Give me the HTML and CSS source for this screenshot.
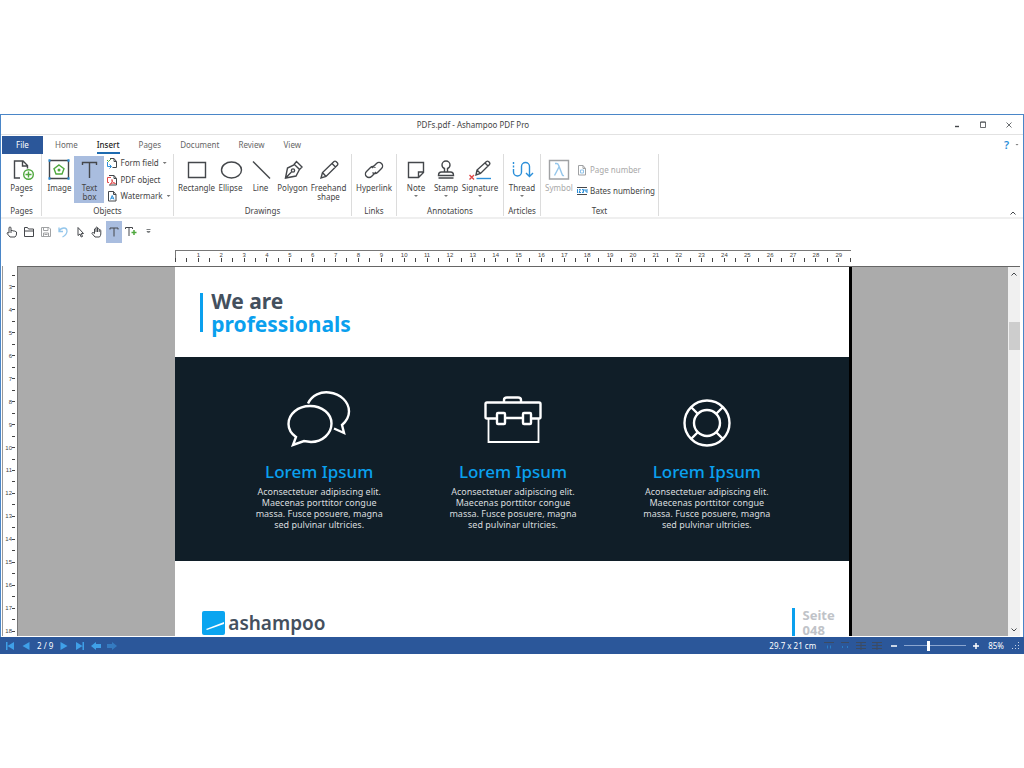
FILE: index.html
```html
<!DOCTYPE html>
<html lang="en">
<head>
    <meta charset="UTF-8">
    <title>PDFs.pdf - Ashampoo PDF Pro</title>
    <meta name="viewport" content="width=device-width, initial-scale=1.0">
    <link rel="stylesheet" href="styles.css">
</head>
<body>
    <div class="window">
        <!-- Title bar -->
        <header class="title-bar">
            <span class="title">PDFs.pdf - Ashampoo PDF Pro</span>
            <div class="window-buttons">
                <button aria-label="Minimize"><svg width="8" height="8" viewBox="0 0 8 8"><path d="M2 5.500h4" stroke-width="1.400"/></svg></button>
                <button aria-label="Maximize"><svg width="8" height="8" viewBox="0 0 8 8"><path d="M1.500 1h5v5.500h-5zM1.500 1.200h5" stroke-width=".8"/></svg></button>
                <button aria-label="Close"><svg width="8" height="8" viewBox="0 0 8 8"><path d="M1.500 1.500l5 5M6.500 1.500l-5 5" stroke-width=".8"/></svg></button>
            </div>
        </header>

        <!-- Ribbon tabs -->
        <nav class="tabs">
            <button class="tab file">File</button>
            <button class="tab">Home</button>
            <button class="tab active">Insert</button>
            <button class="tab">Pages</button>
            <button class="tab">Document</button>
            <button class="tab">Review</button>
            <button class="tab">View</button>
            <button class="help">?</button>
            <i class="arrow"></i>
        </nav>

        <!-- Ribbon -->
        <div class="ribbon">
            <section class="group pages">
                <div class="tools">
                    <button class="tool">
                        <svg width="24" height="22" viewBox="0 0 24 22"><path d="M10 20H4.500V3H13l4.500 4.500v3M12.500 3v5h5"/><circle class="green" cx="18.500" cy="16.500" r="4.800"/><path class="green" d="M18.500 13.500v6M15.500 16.500h6"/></svg>
                        <span>Pages</span><i class="arrow"></i>
                    </button>
                </div>
                <h2>Pages</h2>
            </section>
            <section class="group objects">
                <div class="tools">
                    <button class="tool">
                        <svg width="24" height="22" viewBox="0 0 24 22"><path d="M2.500 2.500h19v18h-19z"/><path class="green" d="M12 7l5 3.800-2 5.200H9l-2-5.200z"/><circle class="green" cx="12" cy="12" r=".8"/><path class="blue" stroke-width="2.400" d="M1.500 2.500h2M20.500 2.500h2M1.500 20.500h2M20.500 20.500h2"/></svg>
                        <span>Image</span>
                    </button>
                    <button class="tool selected">
                        <svg width="24" height="22" viewBox="0 0 24 22"><path d="M5.500 7V4.500h14V7M12.500 4.500V20"/></svg>
                        <span>Text<br>box</span>
                    </button>
                    <div class="tool-list">
                        <button><svg width="12" height="12" viewBox="0 0 12 12"><path d="M4 1.500h4l2.500 3v6H6.500M8 1.500v3h2.500"/><path class="blue" d="M1.500 5v4.500h3.500M3.500 7.500l2 2-2 2"/><path class="green" d="M1 3l1.500 1.500L5 2"/></svg>Form field<i class="arrow"></i></button>
                        <button><svg width="12" height="12" viewBox="0 0 12 12"><path d="M3 1.500h5l2.500 3v6.500H3M8 1.500v3h2.500"/><path class="red" d="M5 3.500H1.500v5H3M4 10.500c2.500-2 2.500-5 2-5s0 3 3.500 4c-1.500-1-4-.5-5.500 1z"/></svg>PDF object</button>
                        <button><svg width="12" height="12" viewBox="0 0 12 12"><path d="M2.500 1.500h5l2.500 3v6.500H2.500zM7.500 1.500v3H10"/><path class="blue" d="M4.500 9.500l1.700-4 1.800 4M5 8.200h2.500"/></svg>Watermark<i class="arrow"></i></button>
                    </div>
                </div>
                <h2>Objects</h2>
            </section>
            <section class="group drawings">
                <div class="tools">
                    <button class="tool wide">
                        <svg width="24" height="22" viewBox="0 0 24 22"><path d="M3.500 4.500h17v15h-17z"/></svg>
                        <span>Rectangle</span>
                    </button>
                    <button class="tool">
                        <svg width="24" height="22" viewBox="0 0 24 22"><ellipse cx="12.500" cy="12" rx="10" ry="8"/></svg>
                        <span>Ellipse</span>
                    </button>
                    <button class="tool">
                        <svg width="24" height="22" viewBox="0 0 24 22"><path d="M4 3.500l17 17"/></svg>
                        <span>Line</span>
                    </button>
                    <button class="tool polygon">
                        <svg width="24" height="22" viewBox="0 0 24 22"><path d="M4.500 20l2-10 7-3.500 5 5L15 18zM4.500 20l6-6M13 6.500l2.500-3 5.500 5.500-2.500 2.500"/><circle cx="12" cy="12.500" r="1.600"/></svg>
                        <span>Polygon</span>
                    </button>
                    <button class="tool wide">
                        <svg width="24" height="22" viewBox="0 0 24 22"><path d="M4 20l1.500-5.500L17 3.500q1-.8 2 0L20.500 5q.8 1 0 2L9 18.500zM15 5.500L18.500 9M5.500 14.500L9 18.500"/></svg>
                        <span>Freehand<br>shape</span>
                    </button>
                </div>
                <h2>Drawings</h2>
            </section>
            <section class="group links">
                <div class="tools">
                    <button class="tool wide">
                        <svg width="24" height="22" viewBox="0 0 24 22"><path d="M10 10l4.500-4.500a3.500 3.500 0 0 1 5 5L15.500 14.500a3.500 3.500 0 0 1-5 0M14 14l-4.500 4.500a3.500 3.500 0 0 1-5-5L8.500 9.500a3.500 3.500 0 0 1 5 0"/></svg>
                        <span>Hyperlink</span>
                    </button>
                </div>
                <h2>Links</h2>
            </section>
            <section class="group annotations">
                <div class="tools">
                    <button class="tool">
                        <svg width="24" height="22" viewBox="0 0 24 22"><path d="M4.500 4.500h15v10l-5 5h-10zM19.500 14h-5v5.500"/></svg>
                        <span>Note</span><i class="arrow"></i>
                    </button>
                    <button class="tool">
                        <svg width="24" height="22" viewBox="0 0 24 22"><path d="M10.500 14v-3.500q-2.500-1-2.500-3.500a4 4 0 0 1 8 0q0 2.500-2.500 3.500V14M4.500 17.500q0-3.500 3-3.500h9q3 0 3 3.500zM4.500 20h15"/></svg>
                        <span>Stamp</span><i class="arrow"></i>
                    </button>
                    <button class="tool wide">
                        <svg width="24" height="22" viewBox="0 0 24 22"><path d="M8 17l1-5 9.500-8.500q1-.8 2 0l1 1q.8 1 0 2L12.500 15.500zM17 5l3 3M9 12l3.500 3.500"/><path class="blue" d="M8.500 20.500H23"/><path class="red" d="M1.500 17l4.500 4.500M6 17l-4.500 4.500"/></svg>
                        <span>Signature</span><i class="arrow"></i>
                    </button>
                </div>
                <h2>Annotations</h2>
            </section>
            <section class="group articles">
                <div class="tools">
                    <button class="tool">
                        <svg width="24" height="22" viewBox="0 0 24 22"><path class="blue" d="M3.500 4v6" stroke-dasharray="2 1.500"/><path class="blue" d="M3.500 11v3a3.500 3.500 0 0 0 8 0V8.500a4 4 0 0 1 8 0V18M16 15l3.500 3.500L23 15"/></svg>
                        <span>Thread</span><i class="arrow"></i>
                    </button>
                </div>
                <h2>Articles</h2>
            </section>
            <section class="group text">
                <div class="tools">
                    <button class="tool disabled" disabled>
                        <svg width="24" height="22" viewBox="0 0 24 22"><path d="M2.500 2.500h19v18.500h-19z"/><path class="blue" d="M8 5.500h1.500q1.500 0 2 1.500l3.500 9q.5 2 2 1.500M12 9l-4.500 8.500"/></svg>
                        <span>Symbol</span>
                    </button>
                    <div class="tool-list spaced">
                        <button class="disabled" disabled><svg width="12" height="12" viewBox="0 0 12 12"><path d="M2.500 1.500h4.500l2.500 3v6.500H2.500zM7 1.500v3h2.500"/><path class="blue" d="M4.500 6h3v3h-3M4.500 6v3"/></svg>Page number</button>
                        <button><svg width="12" height="12" viewBox="0 0 12 12"><path d="M1 2.500h10M1 9.500h10"/><path class="blue" d="M1.500 4v4M3 4.500h1.500L3 7.500h2M6 4.500h1.500v3H6M6.500 6h1M9 4v2h2M11 4v4"/></svg>Bates numbering</button>
                    </div>
                </div>
                <h2>Text</h2>
            </section>
            <button class="collapse" aria-label="Collapse ribbon"><svg width="6" height="4" viewBox="0 0 6 4"><path d="M.5 3.500L3 1l2.500 2.500"/></svg></button>
        </div>

        <!-- Quick access bar -->
        <div class="quick-bar">
            <button aria-label="Touch mode"><svg width="12" height="12" viewBox="0 0 12 12"><path d="M5 7V2q0-1-1-1T3 2v5L1.500 6.500q-.8.600 0 1.500L4 11h5q1.500-1.500 1.500-3V6q-.5-.8-1.500-.5Q8.500 4.500 7 5 6.500 4.200 5 4.500"/></svg></button>
            <button aria-label="Open"><svg width="12" height="12" viewBox="0 0 12 12"><path d="M1.500 10.500v-9h3l1 1.500h5v7.500zM1.500 5h9"/></svg></button>
            <button class="disabled" aria-label="Save" disabled><svg width="12" height="12" viewBox="0 0 12 12"><path d="M1.500 1.500h7.500l1.500 1.500v7.500h-9zM3.500 1.500V4.500h4.500v-3M3.500 10.500V7h5v3.500M4.500 8.500h3"/></svg></button>
            <button class="disabled" aria-label="Undo" disabled><svg width="12" height="12" viewBox="0 0 12 12"><path class="blue" stroke-width="1.300" d="M2 1.500v4h4M2 5q2-3 5-3t3 3.500Q9.500 9 5.500 11"/></svg></button>
            <button aria-label="Select"><svg width="12" height="12" viewBox="0 0 12 12"><path d="M4 1.500v8l2-1.500 1.200 3 1.300-.5L7.300 7.500H9.500z"/></svg></button>
            <button aria-label="Hand"><svg width="12" height="12" viewBox="0 0 12 12"><path d="M4 11L1 7.500q0-1.200 1.200-1L3.500 7.500V3q.8-1 1.500 0V1.500q.8-1 1.500 0V3q.8-1 1.700 0v1q1-.8 1.600.3V8Q9.800 9.500 8.500 11zM5 3v3M6.500 3v3M8.200 4v2"/></svg></button>
            <button class="selected" aria-label="Text box"><svg width="12" height="12" viewBox="0 0 12 12"><path d="M2 3.500v-1.500h8v1.500M6 2v8.500"/></svg></button>
            <button aria-label="Add text"><svg width="12" height="12" viewBox="0 0 12 12"><path d="M.5 3V1.500h7V3M4 1.500V10"/><path class="green" stroke-width="1.500" d="M9 4v5M6.500 6.500h5"/></svg></button>
            <button aria-label="Customize"><svg width="12" height="12" viewBox="0 0 12 12"><path stroke-width=".7" d="M4.500 3.500h4M5 5.500h3L6.500 7z"/></svg></button>
        </div>

        <div class="ruler-row"><div class="ruler" id="rulerTop"></div></div>

        <!-- Document -->
        <main class="workspace">
            <div class="side-ruler" id="rulerLeft"></div>
            <div class="canvas">
                <article class="page">
                    <h1><span>We are</span><span class="accent">professionals</span></h1>
                    <div class="features">
                        <div class="feature">
                            <svg width="64" height="58" viewBox="0 0 64 58"><path d="M21 13.500C25 5 34 1.500 42 2.500 54 4 62 12 62 21.500c0 6-3 10-7 13.500l2 8-10-4.500M23 16c12 0 21.500 7.500 21.500 17.500S35.500 52 24 52l-7-1-11 4 3-8C4 43.500 1.500 39 1.500 34 1.500 24 11 16 23 16z"/></svg>
                            <h3>Lorem Ipsum</h3>
                            <p>Aconsectetuer adipiscing elit. Maecenas porttitor congue massa. Fusce posuere, magna sed pulvinar ultricies.</p>
                        </div>
                        <div class="feature">
                            <svg width="64" height="58" viewBox="0 0 64 58"><path d="M23 12.500V10q0-2.500 3-2.500h11q3 0 3 2.500v2.500M16 28.500H6q-1.500 0-1.500-1.500V14q0-1.500 1.500-1.500h52q1.500 0 1.500 1.500v13q0 1.500-1.500 1.500h-8M42 28H24"/><path d="M7.500 29v23h50V29" stroke-width="1.800"/><rect x="16" y="23" width="8" height="11" rx="1"/><rect x="42" y="23" width="8" height="11" rx="1"/></svg>
                            <h3>Lorem Ipsum</h3>
                            <p>Aconsectetuer adipiscing elit. Maecenas porttitor congue massa. Fusce posuere, magna sed pulvinar ultricies.</p>
                        </div>
                        <div class="feature">
                            <svg width="64" height="58" viewBox="0 0 64 58"><circle cx="32" cy="33" r="22.500"/><circle cx="32" cy="33" r="13"/><path d="M16.500 17.500l6 6M47.500 17.500l-6 6M16.500 48.500l6-6M47.500 48.500l-6-6"/></svg>
                            <h3>Lorem Ipsum</h3>
                            <p>Aconsectetuer adipiscing elit. Maecenas porttitor congue massa. Fusce posuere, magna sed pulvinar ultricies.</p>
                        </div>
                    </div>
                    <footer class="page-footer">
                        <div class="logo">
                            <svg width="23" height="24" viewBox="0 0 23 24"><rect width="23" height="24" rx="2" fill="#0aa5f0"/><path d="M4 18L22 11v2L5 19z" fill="#fff"/></svg>
                            <span>ashampoo</span>
                        </div>
                        <div class="page-number"><span>Seite</span><span>048</span></div>
                    </footer>
                </article>
            </div>
            <div class="scrollbar">
                <button aria-label="Scroll up"><svg width="8" height="6" viewBox="0 0 8 6"><path d="M1.500 4.500L4 2l2.500 2.500"/></svg></button>
                <div class="thumb"></div>
                <button aria-label="Scroll down"><svg width="8" height="6" viewBox="0 0 8 6"><path d="M1.500 1.500L4 4l2.500-2.500"/></svg></button>
            </div>
        </main>

        <!-- Status bar -->
        <footer class="status-bar">
            <div class="pager">
                <button aria-label="First page"><svg width="10" height="8" viewBox="0 0 10 8"><path d="M1 0h1.500v8H1zM9 0v8L2.500 4z"/></svg></button>
                <button aria-label="Previous page"><svg width="10" height="8" viewBox="0 0 10 8"><path d="M8.500 0v8L1.500 4z"/></svg></button>
                <span>2 / 9</span>
                <button aria-label="Next page"><svg width="10" height="8" viewBox="0 0 10 8"><path d="M1.500 0v8l7-4z"/></svg></button>
                <button aria-label="Last page"><svg width="10" height="8" viewBox="0 0 10 8"><path d="M1 0v8l6.500-4zM7.500 0H9v8H7.500z"/></svg></button>
                <button aria-label="Back"><svg width="10" height="8" viewBox="0 0 10 8"><path d="M0 4l5-4v2h5v4H5v2z"/></svg></button>
                <button aria-label="Forward" disabled><svg width="10" height="8" viewBox="0 0 10 8"><path d="M10 4L5 0v2H0v4h5v2z"/></svg></button>
            </div>
            <div class="view">
                <span>29.7 x 21 cm</span>
                <div class="layouts">
                    <button aria-label="Actual size"><svg width="10" height="8" viewBox="0 0 10 8"><path d="M0 .5h10"/><path class="blue" d="M3.500 3.500v3M6.500 3.500v3"/></svg></button>
                    <button aria-label="Page width"><svg width="10" height="8" viewBox="0 0 10 8"><path d="M1 .5h8"/><path class="blue" d="M3 4L2 5l1 1M7 4l1 1-1 1"/></svg></button>
                    <button aria-label="Continuous"><svg width="10" height="8" viewBox="0 0 10 8"><path d="M0 .5h10M0 3.500h10M0 6.500h10M5 0v8"/></svg></button>
                    <button aria-label="Facing pages"><svg width="10" height="8" viewBox="0 0 10 8"><path d="M0 .5h10M0 3.500h10M0 6.500h10M5 0v8"/></svg></button>
                </div>
                <div class="zoom">
                    <button aria-label="Zoom out"><svg width="8" height="8" viewBox="0 0 8 8"><path d="M1 4h6"/></svg></button>
                    <input type="range" min="0" max="100" value="38" aria-label="Zoom">
                    <button aria-label="Zoom in"><svg width="8" height="8" viewBox="0 0 8 8"><path d="M1 4h6M4 1v6"/></svg></button>
                </div>
                <span>85%</span>
                <svg class="grip" width="8" height="8" viewBox="0 0 8 8"><path d="M6 0h1v1H6zM6 3h1v1H6zM3 3h1v1H3zM6 6h1v1H6zM3 6h1v1H3zM0 6h1v1H0z"/></svg>
            </div>
        </footer>
    </div>
    <script src="script.js"></script>
</body>
</html>
```
FILE: styles.css
```css
* { box-sizing: border-box; }
body {
    margin: 0;
    padding: 114px 0;
    background: #fff;
    font-family: "Noto Sans", "Open Sans", sans-serif;
    font-size: 8px;
    line-height: 10px;
    color: #444;
}
h1, h2, h3, p { margin: 0; }
button {
    display: flex;
    align-items: center;
    justify-content: center;
    padding: 0;
    border: none;
    background: none;
    font: inherit;
    color: inherit;
    cursor: pointer;
}
svg { display: block; flex: none; fill: none; stroke: #44474b; }
svg .green { stroke: #4fa83d; }
svg .blue { stroke: #2b8fd9; }
svg .red { stroke: #e04848; }
.window {
    display: flex;
    flex-direction: column;
    height: calc(100vh - 228px);
    border: 1px solid #4a86c8;
    border-bottom: none;
}

/* Title bar */
.title-bar {
    display: grid;
    grid-template-columns: 1fr auto 1fr;
    align-items: center;
    height: 20px;
    padding: 0 10px;
    border-bottom: 1px solid #e2e2e2;
}
.title { grid-column: 2; padding-right: 78px; }
.window-buttons { display: flex; justify-content: flex-end; gap: 18px; }

/* Tabs */
.tabs {
    display: flex;
    align-items: center;
    height: 19px;
    padding: 0 4px 0 1px;
    color: #666;
}
.tab { height: 18px; margin-right: 19px; border-top: 2px solid transparent; border-bottom: 2px solid transparent; }
.tab.file {
    width: 41px;
    margin-right: 12px;
    background: #2b579a;
    color: #fff;
}
.tab.active { color: #222; font-weight: 500; border-bottom-color: #1e6bb0; }
.help { margin-left: auto; margin-right: 6px; color: #2b8fd9; font-size: 11px; font-weight: 600; }
.arrow {
    width: 4px;
    height: 2px;
    background: #777;
    clip-path: polygon(0 0, 100% 0, 50% 100%);
}

/* Ribbon */
.ribbon {
    display: flex;
    height: 65px;
    padding-left: 1px;
    border-bottom: 2px solid #efefef;
}
.group {
    display: flex;
    flex-direction: column;
    justify-content: space-between;
    margin-bottom: 1px;
    padding: 2px 1px 0;
    border-right: 1px solid #dcdcdc;
}
.group h2 { font-size: 8px; font-weight: 400; text-align: center; }
.pages { width: 40px; }
.objects { width: 132px; }
.drawings { width: 178px; }
.links { width: 45px; }
.annotations { width: 107px; }
.articles { width: 37px; }
.text { width: 118px; }
.tools { display: flex; justify-content: center; }
.tool {
    flex-direction: column;
    justify-content: flex-start;
    width: 30px;
    height: 47px;
    padding-top: 2px;
    line-height: 9px;
    white-space: nowrap;
}
.tool.wide { width: 38px; }
.tool.polygon { width: 34px; }
.tool span { padding-top: 3px; }
.tool .arrow { margin-top: 3px; }
.tool svg { stroke-width: 1.4; }
.selected { background: #a9bddf; }
.tool-list { display: flex; flex-direction: column; justify-content: space-between; padding-left: 2px; height: 47px; }
.tool-list button { justify-content: flex-start; gap: 2px; height: 14px; white-space: nowrap; }
.tool-list .arrow { margin-left: 2px; }
.tool-list.spaced { height: 42px; padding-top: 7px; }
.disabled { color: #a8a8a8; }
.disabled svg { opacity: 0.5; }
.collapse { align-self: flex-end; margin: 0 7px 2px auto; }

/* Quick access bar */
.quick-bar { display: flex; height: 26px; padding: 2px 0 2px 3px; gap: 1px; }
.quick-bar button { width: 16px; }

/* Rulers */
.ruler-row { display: flex; justify-content: center; height: 21px; padding: 5px 15px 0 17px; }
.ruler {
    display: flex;
    justify-content: space-between;
    width: 68.3%;
    height: 12px;
    box-shadow: inset 1px 1px 0 #777;
    font: 6px/6px "Liberation Sans", Arial, sans-serif;
}
.tick {
    display: flex;
    flex-direction: column;
    align-items: center;
    justify-content: flex-end;
    width: 1px;
}
.tick::after { content: ""; flex: none; width: 1px; height: 4px; background: #444; }
.side-ruler {
    display: flex;
    flex-direction: column;
    justify-content: space-between;
    width: 15px;
    margin-left: 1px;
    padding: 9px 2px 4px 0;
    border-left: 1px solid #999;
    font: 6px/6px "Liberation Sans", Arial, sans-serif;
}
.side-ruler .tick { flex-direction: row; width: auto; height: 1px; }
.side-ruler .tick::after { width: 3px; height: 1px; }

/* Document */
.workspace { display: flex; flex: 1; min-height: 0; }
.canvas {
    flex: 1;
    display: flex;
    justify-content: center;
    overflow: hidden;
    padding-left: 1px;
    background: #ababab;
    border-top: 1px solid #666;
    border-left: 1px solid #777;
}
.page {
    display: flex;
    flex-direction: column;
    width: 68.4%;
    background: #fff;
    border-right: 3px solid #000;
}
.page h1 {
    display: grid;
    grid-template-columns: 3px 1fr;
    grid-template-rows: 23px 23px;
    column-gap: 8px;
    flex: none;
    height: 90px;
    padding: 23px 0 0 25px;
    font-size: 21px;
    line-height: 23px;
    color: #44505e;
}
.page h1::before { content: ""; grid-row: 1 / 3; height: 39px; margin-top: 3px; background: #0aa0ee; }
.page h1 .accent { color: #0aa0ee; }
.features {
    display: grid;
    flex: none;
    grid-template-columns: repeat(3, 1fr);
    height: 204px;
    padding: 33px 45px 0 47px;
    background: #101e28;
}
.feature { display: flex; flex-direction: column; align-items: center; text-align: center; }
.feature svg { stroke: #fff; stroke-width: 2.4; }
.feature h3 { margin-top: 12px; font-size: 17px; line-height: 24px; font-weight: 500; color: #0aa0ee; }
.feature p { width: 136px; font-size: 9px; line-height: 11px; color: #d8dcdf; margin-top: 2px; }
.page-footer { display: flex; justify-content: space-between; align-items: flex-start; padding: 47px 14px 0 27px; }
.logo { display: flex; align-items: center; gap: 3px; padding-top: 3px; font-size: 19px; line-height: 24px; font-weight: 600; color: #44505e; }
.logo svg { stroke: none; }
.page-number {
    display: flex;
    flex-direction: column;
    padding-left: 8px;
    border-left: 3px solid #0aa0ee;
    font-size: 13px;
    line-height: 15px;
    font-weight: 700;
    color: #c0c3c8;
}
.scrollbar {
    display: flex;
    flex-direction: column;
    width: 12px;
    margin-right: 3px;
    background: #f0f0f0;
    border-top: 1px solid #666;
}
.scrollbar button { height: 13px; }
.scrollbar .thumb { height: 28px; margin: 42px 0 auto 1px; background: #cdcdcd; }

/* Status bar */
.status-bar {
    display: flex;
    justify-content: space-between;
    height: 17px;
    margin: 1px -1px 0;
    padding: 0 4px 0 5px;
    background: #2b579a;
    color: #fff;
}
.pager, .view, .layouts, .zoom { display: flex; align-items: center; }
.pager { gap: 6px; }
.pager svg { fill: #3fa0e8; stroke: none; }
.pager button:disabled { opacity: 0.5; }
.view { gap: 8px; }
.layouts { gap: 6px; }
.layouts svg { opacity: 0.7; }
.zoom { gap: 6px; }
.zoom svg { stroke: #fff; stroke-width: 1.5; }
.zoom input {
    appearance: none;
    width: 62px;
    height: 10px;
    margin: 0;
    background: linear-gradient(#8ba6d0, #8ba6d0) center / 100% 1px no-repeat;
}
.zoom input::-webkit-slider-thumb { appearance: none; width: 3px; height: 10px; background: #fff; }
.view .grip { fill: #c3d0e6; stroke: none; }
```
FILE: script.js
```js
// Fill a ruler with a tick every half centimetre, numbers on the whole ones
function drawRuler(id, from, to) {
    const ruler = document.getElementById(id);
    for (let cm = from; cm <= to; cm += 0.5) {
        const tick = document.createElement('span');
        tick.className = 'tick';
        if (cm > 0 && cm % 1 === 0) {
            tick.textContent = cm;
        }
        ruler.appendChild(tick);
    }
}

drawRuler('rulerTop', 0, 29.5);
drawRuler('rulerLeft', 2.5, 18);
```
